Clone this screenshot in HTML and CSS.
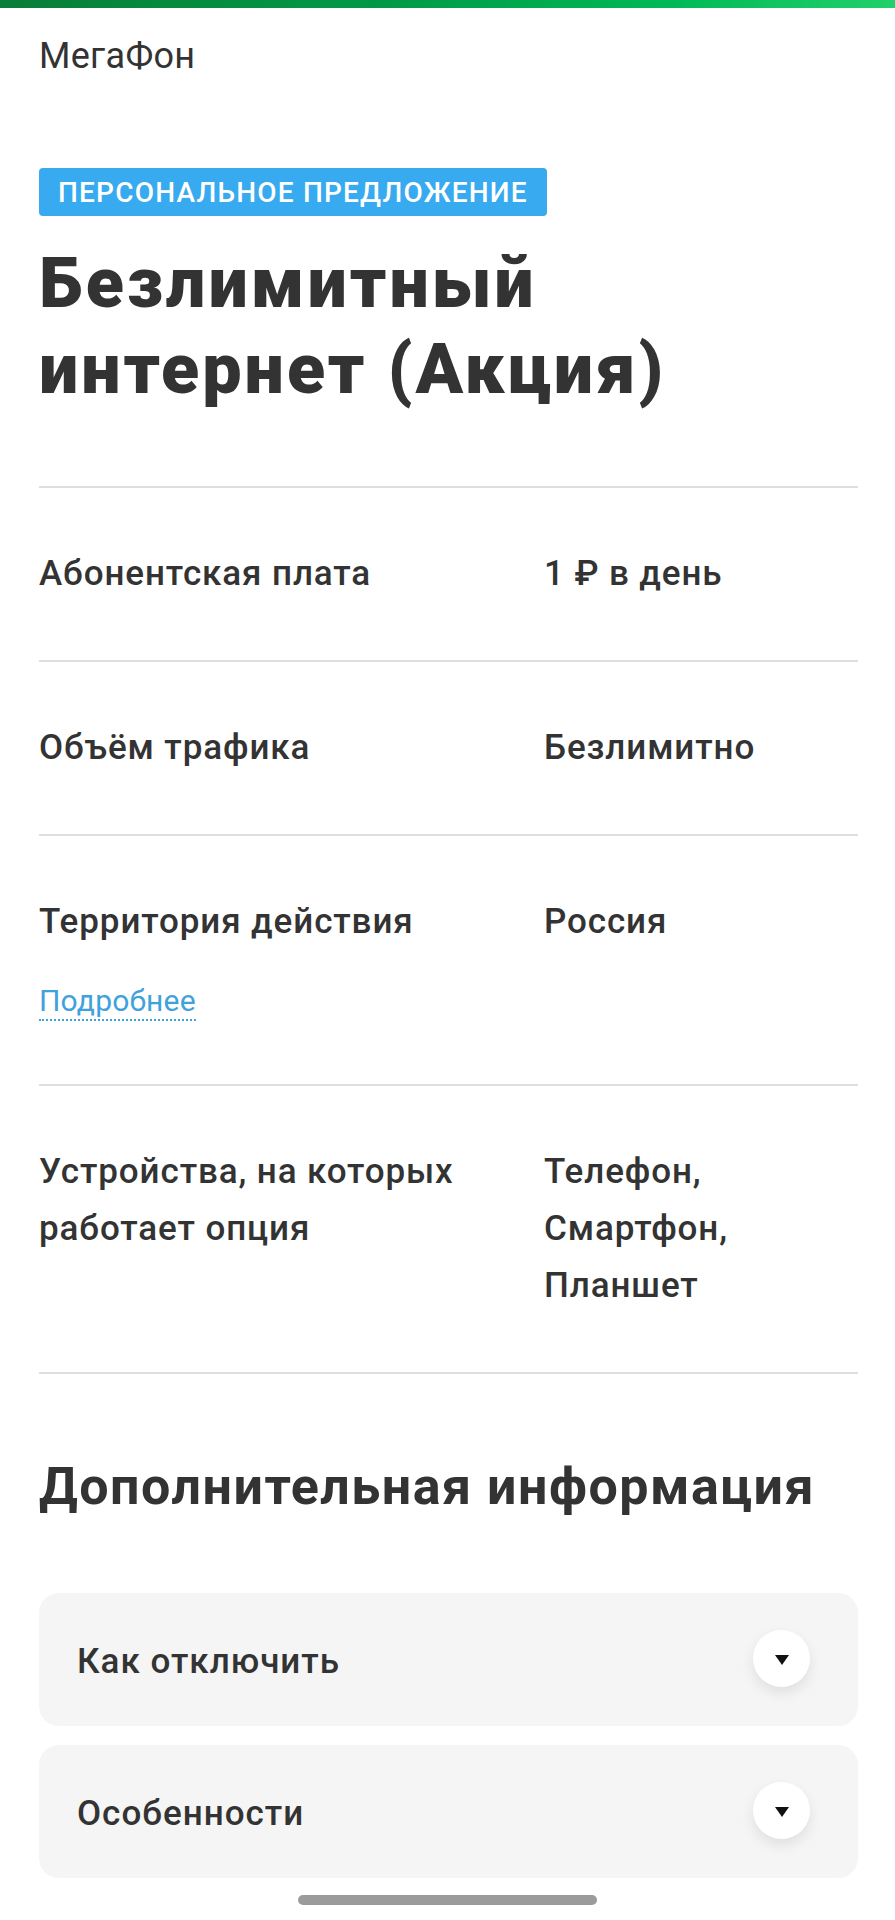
FILE: index.html
```html
<!DOCTYPE html>
<html lang="ru">
<head>
<meta charset="utf-8">
<title>Безлимитный интернет (Акция)</title>
<link rel="stylesheet" href="styles.css">
</head>
<body>
<div class="topbar"></div>
<header class="header">МегаФон</header>
<main class="content">
  <div class="badge">Персональное предложение</div>
  <h1 class="title">Безлимитный интернет (Акция)</h1>

  <section class="params">
    <div class="row">
      <div class="label">Абонентская плата</div>
      <div class="value">1 ₽ в день</div>
    </div>
    <div class="row">
      <div class="label">Объём трафика</div>
      <div class="value">Безлимитно</div>
    </div>
    <div class="row">
      <div class="label">
        <div>Территория действия</div>
        <div class="more"><span class="link">Подробнее</span></div>
      </div>
      <div class="value">Россия</div>
    </div>
    <div class="row">
      <div class="label">Устройства, на которых работает опция</div>
      <div class="value">Телефон,<br>Смартфон,<br>Планшет</div>
    </div>
  </section>

  <h2 class="subtitle">Дополнительная информация</h2>

  <div class="accordion">
    <div class="acc-item">
      <span class="acc-text">Как отключить</span>
      <span class="acc-btn"><span class="tri"></span></span>
    </div>
    <div class="acc-item">
      <span class="acc-text">Особенности</span>
      <span class="acc-btn"><span class="tri"></span></span>
    </div>
  </div>
</main>
<div class="home-indicator"></div>
</body>
</html>
```
FILE: styles.css
```css
* { box-sizing: border-box; }

html, body {
  margin: 0;
  padding: 0;
  background: #ffffff;
}

body {
  font-family: Roboto, "Noto Sans", "Liberation Sans", sans-serif;
  color: #333333;
  width: 895px;
  min-height: 1920px;
}

.topbar {
  height: 8px;
  background: linear-gradient(90deg, #0a7d39 0%, #009b48 45%, #00b956 75%, #23d06b 100%);
}

.header {
  padding: 24px 39px 0;
  font-size: 36px;
  line-height: 48px;
  font-weight: 400;
  letter-spacing: 0.3px;
  color: #333333;
}

.content {
  padding: 0 37px 0 39px;
}

.badge {
  display: inline-block;
  margin-top: 88px;
  height: 48px;
  padding: 1px 19px 0 19px;
  background: #38aaef;
  color: #ffffff;
  border-radius: 4px;
  font-size: 28px;
  line-height: 47px;
  font-weight: 500;
  letter-spacing: 1.2px;
  text-transform: uppercase;
}

.title {
  margin: 24px 0 0;
  font-size: 70px;
  line-height: 86px;
  font-weight: 900;
  letter-spacing: 3px;
  color: #333333;
  width: 780px;
}

.params {
  margin-top: 74px;
  border-bottom: 2px solid #dedede;
}

.row {
  display: grid;
  grid-template-columns: 505px 1fr;
  padding: 57px 0 58px;
  border-top: 2px solid #dedede;
  font-size: 35px;
  line-height: 57px;
  font-weight: 500;
  letter-spacing: 0.9px;
}

.more {
  margin: 32px 0 5px;
  line-height: 36px;
}

.link {
  display: inline-block;
  font-size: 30px;
  line-height: 36px;
  font-weight: 400;
  letter-spacing: 0.2px;
  color: #3fa2dc;
  border-bottom: 2px dotted #3fa2dc;
}

.subtitle {
  margin: 83px 0 0;
  font-size: 52px;
  line-height: 60px;
  font-weight: 700;
  letter-spacing: 1.5px;
  color: #333333;
}

.accordion {
  margin-top: 76px;
  display: flex;
  flex-direction: column;
  gap: 19px;
}

.acc-item {
  height: 133px;
  border-radius: 20px;
  background: #f5f5f5;
  display: flex;
  align-items: center;
  justify-content: space-between;
  padding: 4px 48px 0 38px;
}

.acc-text {
  font-size: 35px;
  font-weight: 500;
  line-height: 48px;
  letter-spacing: 1px;
}

.acc-btn {
  width: 57px;
  height: 57px;
  border-radius: 50%;
  background: #ffffff;
  box-shadow: 0 6px 14px rgba(0, 0, 0, 0.09);
  display: flex;
  align-items: center;
  justify-content: center;
  margin-top: -6px;
}

.tri {
  width: 0;
  height: 0;
  border-left: 7px solid transparent;
  border-right: 7px solid transparent;
  border-top: 10px solid #111111;
  margin-top: 2px;
}

.home-indicator {
  width: 299px;
  height: 10px;
  margin: 17px auto 0;
  border-radius: 5px;
  background: #9b9b9b;
}
```
